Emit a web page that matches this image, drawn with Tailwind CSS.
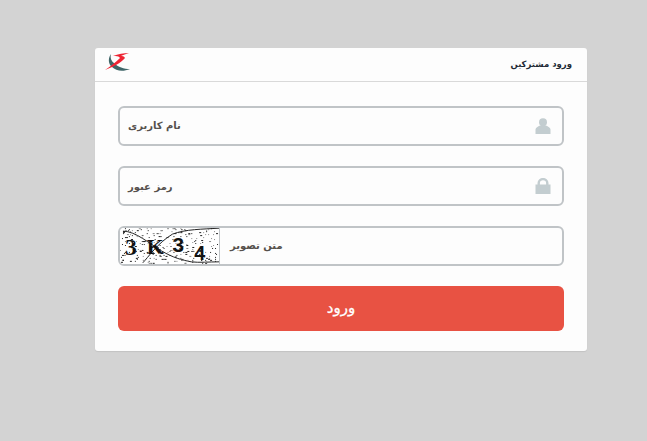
<!DOCTYPE html>
<html lang="fa">
  <head>
    <meta charset="UTF-8" />
    <meta name="viewport" content="width=device-width, initial-scale=1.0" />
    <title>ورود مشترکین</title>
    <script src="https://cdn.jsdelivr.net/npm/@tailwindcss/browser@4"></script>
  </head>
  <body class="bg-[#d3d3d3] h-[441px] overflow-hidden font-['DejaVu_Sans',sans-serif]">
    <div class="ml-[95px] pt-[48px] w-[492px]">
      <div class="bg-[#fdfdfd] rounded-[3px] h-[303px] shadow-[0_1px_1px_rgba(0,0,0,0.08)]">
        <!-- header -->
        <div dir="rtl" class="h-[34px] border-b border-[#d9d9d9] flex items-center justify-between pr-[15px] pl-[10px]">
          <span class="text-[8.5px] font-bold text-[#222a35]">ورود مشترکین</span>
          <svg class="mb-[1px]" width="26" height="24" viewBox="0 0 26 24">
            <path d="M6 2 C5 5 6 9 9 11 C13 15 19 17 25 17 C18 20 11 19 7 15 C3 12 3 6 6 2 Z" fill="#3f6668" />
            <path d="M24 1 C19 1 13 2 8 4 C11 4 14 4 15 6 C11 10 6 14 0 18 C8 15 16 11 20 6 C19 4 17 4 16 4 C18 3 21 2 24 1 Z" fill="#ee2433" />
          </svg>
        </div>

        <div class="px-[23px] pt-[24px] flex flex-col gap-[20px]">
          <div class="h-[40px] border-2 border-[#c0c4c7] rounded-[6px] flex items-center justify-between pl-[8px] pr-[11px]">
            <span dir="rtl" class="mb-[2px] text-[10px] font-bold text-[#55504c]">نام کاربری</span>
            <svg width="16" height="16" viewBox="0 0 16 16">
              <circle cx="8" cy="4.2" r="4" fill="#c3cdd0" />
              <path d="M0.5 16 V11.5 C0.5 9.5 3 8.5 5 7.5 H11 C13 8.5 15.5 9.5 15.5 11.5 V16 Z" fill="#c3cdd0" />
            </svg>
          </div>

          <div class="h-[40px] border-2 border-[#c0c4c7] rounded-[6px] flex items-center justify-between pl-[8px] pr-[11px]">
            <span dir="rtl" class="text-[10px] font-bold text-[#55504c]">رمز عبور</span>
            <svg width="16" height="16" viewBox="0 0 16 16">
              <path d="M3.7 7 V5 C3.7 -0.2 12.3 -0.2 12.3 5 V7" fill="none" stroke="#c3cdd0" stroke-width="2.4" />
              <rect x="0.5" y="6.5" width="15" height="9.5" fill="#c3cdd0" />
            </svg>
          </div>

          <div class="h-[40px] border-2 border-[#c0c4c7] rounded-[6px] flex items-center overflow-hidden">
            <svg id="captcha" class="border-r border-[#c0c4c7] bg-white shrink-0" width="100" height="36" viewBox="0 0 100 36">
              <path d="M3 3 C16 3 30 16 42 23 C54 30 62 32 72 34 C80 35 90 34 100 34" fill="none" stroke="#222" stroke-width="1" />
              <path d="M23 35 C28 30 38 15 53 6 C66 1 84 1 100 0" fill="none" stroke="#222" stroke-width="1" />
              <text x="5" y="27" font-family="Liberation Serif" font-size="24" font-weight="bold" fill="#111">3</text>
              <text x="27" y="26" font-family="Liberation Serif" font-size="22" font-weight="bold" fill="#111">K</text>
              <text x="53" y="24" font-family="Liberation Sans" font-size="21" font-weight="bold" fill="#111">3</text>
              <text x="75" y="32" font-family="Liberation Sans" font-size="20" font-weight="bold" fill="#111">4</text>
            </svg>
            <span dir="rtl" class="mb-[1px] ml-[10px] text-[10px] font-bold text-[#55504c]">متن تصویر</span>
          </div>

          <button dir="rtl" class="h-[45px] pb-[3px] bg-[#e85243] rounded-[6px] text-white text-[15px] font-['Noto_Sans','DejaVu_Sans',sans-serif] font-normal [-webkit-text-stroke:0.3px_white]">ورود</button>
        </div>
      </div>
    </div>

    <script>
      // speckle noise for the captcha, fixed seed so it stays the same
      const captcha = document.getElementById("captcha");
      let seed = 7;
      function rnd() {
        seed = (seed * 16807) % 2147483647;
        return seed / 2147483647;
      }
      for (let i = 0; i < 260; i++) {
        const dot = document.createElementNS("http://www.w3.org/2000/svg", "rect");
        const size = rnd() > 0.8 ? 2 : 1;
        dot.setAttribute("x", Math.floor(rnd() * 100));
        dot.setAttribute("y", Math.floor(rnd() * 36));
        dot.setAttribute("width", size);
        dot.setAttribute("height", 1);
        dot.setAttribute("fill", rnd() > 0.35 ? "#222" : "#888");
        captcha.appendChild(dot);
      }
    </script>
  </body>
</html>
